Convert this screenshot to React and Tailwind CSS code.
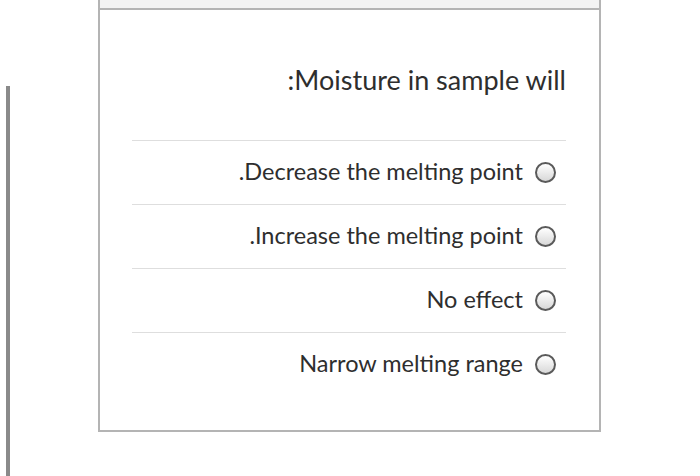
import React from 'react';

const opciones = [
  '.Decrease the melting point',
  '.Increase the melting point',
  'No effect',
  'Narrow melting range',
];

function Radio() {
  return (
    <span className="w-[21px] h-[21px] rounded-full border-2 border-[#5a5a5a] bg-gradient-to-b from-[#ffffff] to-[#d8d8d8] shrink-0" />
  );
}

export default function App() {
  return (
    <div className="w-[700px] h-[476px] bg-white flex overflow-hidden" style={{ fontFamily: 'Lato, "Open Sans", sans-serif' }}>
      <div className="ml-[6px] mt-[86px] w-[4px] h-[390px] bg-[#8a8a8a]" />
      <div className="ml-[88px] w-[503px] h-[432px] border-x-2 border-b-2 border-[#b4b4b4] flex flex-col">
        <div className="h-[10px] bg-[#f3f3f3] border-b-2 border-[#b4b4b4]" />
        <div className="pl-[32px] pr-[33px] pt-[54px]">
          <div className="text-right text-[27px] leading-[32px] text-[#2e2e2e] mb-[44px]">:Moisture in sample will</div>
          {opciones.map((o) => (
            <div key={o} className="h-[64px] border-t border-[#dedede] flex items-center justify-end pr-[10px] gap-[12px]">
              <span className="text-[23.5px] text-[#2e2e2e] leading-[28px] -mt-[3px]">{o}</span>
              <Radio />
            </div>
          ))}
        </div>
      </div>
    </div>
  );
}
